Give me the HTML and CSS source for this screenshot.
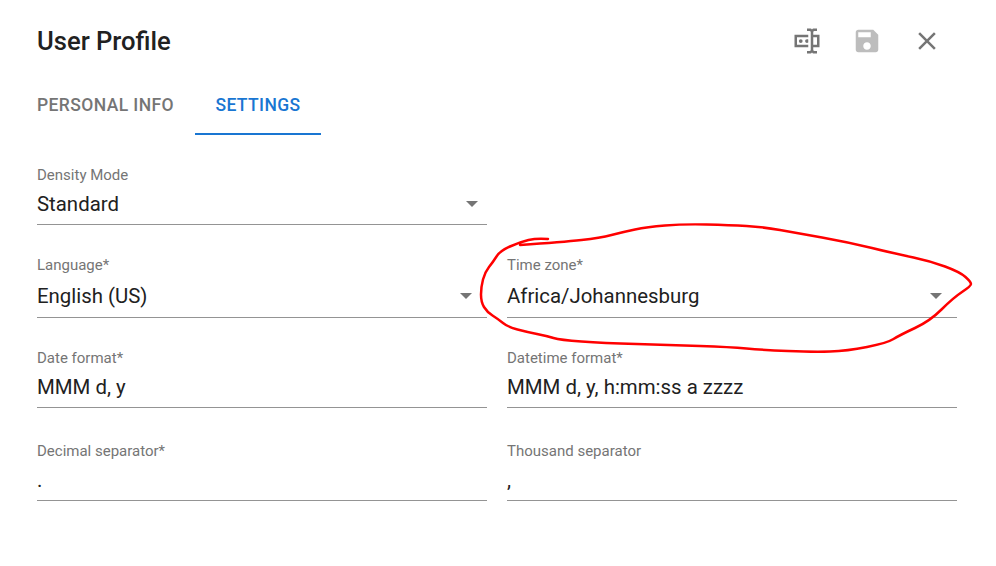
FILE: index.html
```html
<!DOCTYPE html>
<html lang="en">
<head>
<meta charset="utf-8">
<title>User Profile</title>
<link rel="stylesheet" href="styles.css">
</head>
<body>
<div class="dialog">
  <header class="header">
    <h1 class="title">User Profile</h1>
    <div class="actions">
      <button class="icon-btn"><svg viewBox="0 0 24 24" class="icon"><path d="M17,7H22V17H17V19A1,1 0 0,0 18,20H20V22H17.5C16.95,22 16,21.55 16,21C16,21.55 15.05,22 14.5,22H12V20H14A1,1 0 0,0 15,19V5A1,1 0 0,0 14,4H12V2H14.5C15.05,2 16,2.45 16,3C16,2.45 16.95,2 17.5,2H20V4H18A1,1 0 0,0 17,5V7M2,7H13V9H4V15H13V17H2V7M20,15V9H17V15H20M8.5,12A1.5,1.5 0 0,0 7,10.5A1.5,1.5 0 0,0 5.5,12A1.5,1.5 0 0,0 7,13.5A1.5,1.5 0 0,0 8.5,12M13,10.89C12.39,10.33 11.44,10.38 10.88,11C10.32,11.6 10.37,12.55 11,13.11C11.55,13.63 12.43,13.63 13,13.11V10.89Z"/></svg></button>
      <button class="icon-btn disabled"><svg viewBox="0 0 24 24" class="icon"><path d="M17 3H5c-1.11 0-2 .9-2 2v14c0 1.1.89 2 2 2h14c1.1 0 2-.9 2-2V7l-4-4zm-5 16c-1.66 0-3-1.34-3-3s1.34-3 3-3 3 1.34 3 3-1.34 3-3 3zm3-10H5V5h10v4z"/></svg></button>
      <button class="icon-btn"><svg viewBox="0 0 24 24" class="icon"><path d="M19 6.41L17.59 5 12 10.59 6.41 5 5 6.41 10.59 12 5 17.59 6.41 19 12 13.41 17.59 19 19 17.59 13.41 12z"/></svg></button>
    </div>
  </header>
  <nav class="tabs">
    <a class="tab first">Personal Info</a>
    <a class="tab active">Settings</a>
  </nav>
  <form class="form">
    <div class="row row-density">
      <div class="field density">
        <label class="label">Density Mode</label>
        <div class="control"><span class="value">Standard</span><span class="arrow"></span></div>
      </div>
    </div>
    <div class="row row-language">
      <div class="field">
        <label class="label">Language*</label>
        <div class="control tall"><span class="value">English (US)</span><span class="arrow"></span></div>
      </div>
      <div class="field">
        <label class="label">Time zone*</label>
        <div class="control tall"><span class="value">Africa/Johannesburg</span><span class="arrow"></span></div>
      </div>
    </div>
    <div class="row row-date">
      <div class="field">
        <label class="label">Date format*</label>
        <div class="control"><span class="value">MMM d, y</span></div>
      </div>
      <div class="field">
        <label class="label">Datetime format*</label>
        <div class="control"><span class="value">MMM d, y, h:mm:ss a zzzz</span></div>
      </div>
    </div>
    <div class="row row-sep">
      <div class="field">
        <label class="label">Decimal separator*</label>
        <div class="control"><span class="value">.</span></div>
      </div>
      <div class="field">
        <label class="label">Thousand separator</label>
        <div class="control"><span class="value">,</span></div>
      </div>
    </div>
  </form>
  <svg class="scribble" viewBox="0 0 996 566"><path d="M548,239 Q537,238 528.5,240 Q520,242 510,246.5 Q500,251 496.5,256.5 Q493,262 489,267 Q485,272 483,279.5 Q481,287 481,294.5 Q481,302 484,307 Q487,312 492.5,315.5 Q498,319 503,323 Q508,327 517.5,329.5 Q527,332 537,334 Q547,336 553.5,338 Q560,340 581.5,341.5 Q603,343 636.5,344 Q670,345 700,346 Q730,347 746.5,348.5 Q763,350 788,351 Q813,352 830,351.5 Q847,351 867,347 Q887,343 893.5,339 Q900,335 915,328 Q930,321 941.5,309.5 Q953,298 962,292 Q971,286 971,284 Q971,282 965.5,277 Q960,272 945,266.5 Q930,261 913.5,257.5 Q897,254 872,248 Q847,242 822,237.5 Q797,233 780,230 Q763,227 746.5,226 Q730,225 706.5,224.5 Q683,224 665,225.5 Q647,227 635,229.5 Q623,232 611.5,235 Q600,238 581.5,240 Q563,242 520,245"/></svg>
</div>
</body>
</html>
```
FILE: styles.css
```css
* { box-sizing: border-box; }
html, body { margin: 0; padding: 0; background: #fff; }
body { font-family: Roboto, sans-serif; color: #212121; }
.dialog { position: relative; width: 996px; height: 566px; overflow: hidden; padding: 11px 39px 0 37px; }
.header { display: flex; justify-content: space-between; align-items: center; height: 60px; }
.title { margin: 0; font-size: 25.6px; font-weight: 500; line-height: 60px; }
.actions { display: flex; }
.icon-btn { width: 60px; height: 60px; padding: 15px; border: 0; background: none; display: flex; }
.icon { width: 30px; height: 30px; fill: #757575; }
.disabled .icon { fill: #bdbdbd; }
.tabs { display: flex; height: 64px; }
.tab { display: flex; align-items: center; justify-content: center; font-size: 17.5px; font-weight: 500; text-transform: uppercase; color: #757575; padding: 6px 0 0; letter-spacing: .4px; border-bottom: 2px solid transparent; }
.tab.first { width: 158px; justify-content: flex-start; }
.tab.active { width: 126px; color: #1976d2; border-bottom-color: #1976d2; }
.form { display: flex; flex-direction: column; }
.row { display: grid; grid-template-columns: 450px 450px; column-gap: 20px; }
.row-density { margin-top: 31px; }
.row-language { margin-top: 31px; }
.row-date { margin-top: 31px; }
.row-sep { margin-top: 34px; }
.label { display: block; font-size: 15px; line-height: 18px; color: #757575; }
.control { display: flex; justify-content: space-between; align-items: center; height: 41px; border-bottom: 1px solid #949494; padding-right: 15px; }
.control.tall { height: 44px; }
.density .control { padding-right: 9.5px; }
.value { font-size: 20.4px; line-height: 28px; }
.arrow { width: 0; height: 0; border-left: 6.5px solid transparent; border-right: 6.5px solid transparent; border-top: 6.5px solid #757575; }
.scribble { position: absolute; left: 0; top: 0; width: 996px; height: 566px; pointer-events: none; }
.scribble path { fill: none; stroke: #f00; stroke-width: 2.5; stroke-linejoin: round; stroke-linecap: round; }
```
